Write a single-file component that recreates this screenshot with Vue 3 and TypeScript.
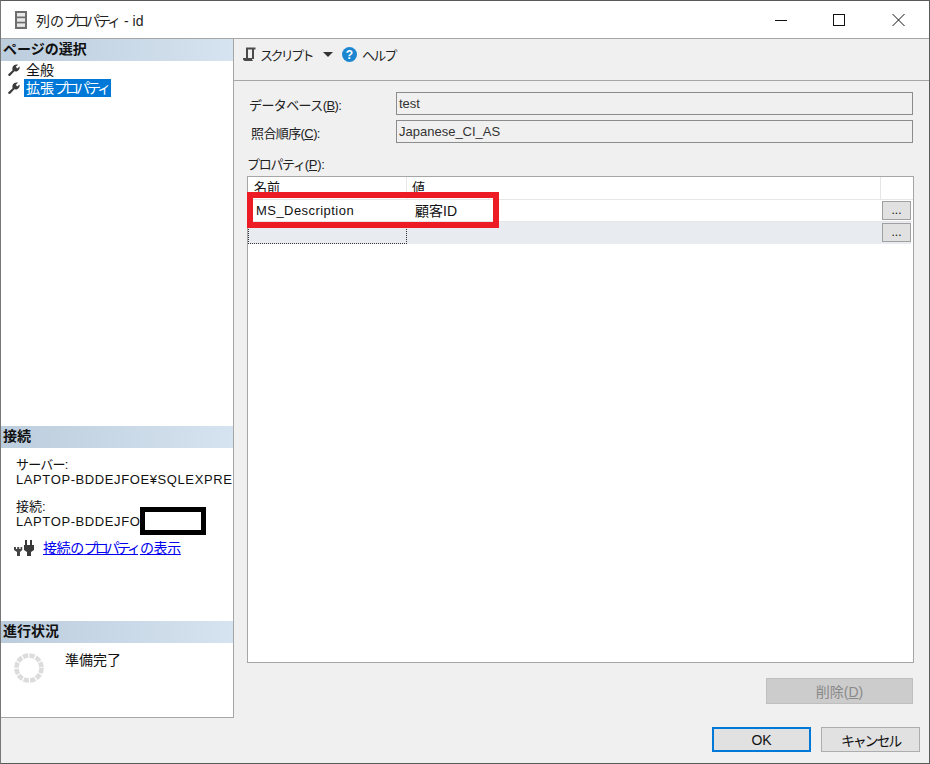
<script setup lang="ts">
const pages = [
  { kanji: '全般', kana: '', selected: false },
  { kanji: '拡張', kana: 'プロパティ', selected: true },
]
</script>

<template>
  <div class="window">
    <header class="titlebar">
      <svg class="title-icon" width="12" height="18" viewBox="0 0 12 18">
        <rect x="0" y="0" width="12" height="18" fill="#6e6e6e" />
        <rect x="2" y="2" width="8" height="3.5" fill="#e8e8e8" />
        <rect x="2" y="7.2" width="8" height="3.5" fill="#e8e8e8" />
        <rect x="2" y="12.4" width="8" height="3.5" fill="#e8e8e8" />
      </svg>
      <span class="title-text">列の<span class="kana">プロパティ</span> - id</span>
      <div class="controls">
        <svg width="58" height="14" viewBox="0 0 58 14"><path d="M0 7.5h12" stroke="#111" /></svg>
        <svg width="59" height="14" viewBox="0 0 59 14"><rect x="0.5" y="1.5" width="11" height="11" fill="none" stroke="#111" /></svg>
        <svg width="13" height="14" viewBox="0 0 13 14"><path d="M0.5 1L12.5 13M12.5 1L0.5 13" stroke="#111" /></svg>
      </div>
    </header>

    <div class="body">
      <aside class="side">
        <section class="sec sec-pages">
          <h2 class="sec-head">ページの選択</h2>
          <ul class="pages">
            <li v-for="p in pages" :key="p.kanji" class="page">
              <svg class="wrench" width="12" height="12" viewBox="0 0 12 12">
                <path d="M0.3 10.2L4.6 6.2C4 4.2 4.6 2 6.4 1C7.6 0.3 9 0.3 10 0.8L7.8 2.8L9.2 4.4L11.5 2.4C12 4.2 11.2 6 9.6 6.9C8.6 7.5 7.4 7.6 6.4 7.3L2.2 11.7C1.6 12.1 0.9 12 0.4 11.5C0 11.1 0 10.6 0.3 10.2Z" fill="#3c3c3c" />
              </svg>
              <span :class="['page-label', { selected: p.selected }]">{{ p.kanji }}<span class="kana">{{ p.kana }}</span></span>
            </li>
          </ul>
        </section>

        <section class="sec sec-conn">
          <h2 class="sec-head">接続</h2>
          <div class="conn">
            <p class="line kana-line">サーバー:</p>
            <p class="line mono">LAPTOP-BDDEJFOE¥SQLEXPRES</p>
            <p class="line gap">接続:</p>
            <p class="line mono">LAPTOP-BDDEJFO</p>
            <span class="redact"></span>
            <div class="linkrow">
              <svg width="20" height="16" viewBox="0 0 20 16">
                <path d="M0 7h2v2h1.2V7h2v2h1.4V7h1.6v3L6 12v4H3v-4L0 10z" fill="#444" />
                <path d="M11 0h2v5h3V0h2v5h2v5l-3 2v4h-4v-4l-3-2V5h1z" fill="#3a3a3a" />
              </svg>
              <a class="link">接続の<span class="kana">プロパティ</span>の表示</a>
            </div>
          </div>
        </section>

        <section class="sec sec-prog">
          <h2 class="sec-head">進行状況</h2>
          <div class="prog">
            <svg width="30" height="30" viewBox="0 0 30 30">
              <circle cx="15" cy="15" r="12.5" fill="none" stroke="#dcdcdc" stroke-width="4.6" stroke-dasharray="5.3 1.25" />
            </svg>
            <span class="prog-text">準備完了</span>
          </div>
        </section>
      </aside>

      <main class="main">
        <div class="toolbar">
          <svg width="13" height="14" viewBox="0 0 13 14">
            <path d="M3 0.5h9.5v2H11v9.5H9V2.5H5V12H3zM0 11h9v1.5l1 1.5H1.5L0 12.5z" fill="#4a4a4a" />
          </svg>
          <span class="tool-text script-text">スクリプト</span>
          <svg class="caret" width="10" height="5" viewBox="0 0 10 5"><path d="M0 0h10L5 5z" fill="#333" /></svg>
          <svg class="help" width="15" height="15" viewBox="0 0 15 15">
            <circle cx="7.5" cy="7.5" r="7.5" fill="#1c86d1" />
            <text x="7.5" y="11.5" text-anchor="middle" class="help-q">?</text>
          </svg>
          <span class="tool-text">ヘルプ</span>
        </div>

        <div class="content">
          <div class="field">
            <label class="field-label">データベース(<u>B</u>):</label>
            <div class="input">test</div>
          </div>
          <div class="field field-2">
            <label class="field-label indent">照合順序(<u>C</u>):</label>
            <div class="input">Japanese_CI_AS</div>
          </div>

          <div class="grid-label"><span class="kana-tight">プロパティ</span>(<u>P</u>):</div>
          <div class="grid">
            <div class="row head">
              <div class="cell name">名前</div>
              <div class="cell val">値</div>
              <div class="cell btn-cell"></div>
            </div>
            <div class="row data">
              <div class="cell name">MS_Description</div>
              <div class="cell val">顧客ID</div>
              <div class="cell btn-cell"><button class="dots">...</button></div>
            </div>
            <div class="row new">
              <div class="cell name focus"></div>
              <div class="cell val"></div>
              <div class="cell btn-cell"><button class="dots">...</button></div>
            </div>
            <span class="annotation"></span>
          </div>

          <div class="delete-row">
            <button class="delete">削除(<u>D</u>)</button>
          </div>
          <div class="actions">
            <button class="act ok">OK</button>
            <button class="act cancel">キャンセル</button>
          </div>
        </div>
      </main>
    </div>
  </div>
</template>

<style scoped>
.window {
  position: relative;
  box-sizing: border-box;
  width: 930px;
  height: 764px;
  display: flex;
  flex-direction: column;
  background: #f0f0f0;
  border: 1px solid #5a5a5a;
  border-left-color: #777;
  font-family: "Liberation Sans", "Noto Sans CJK JP", sans-serif;
  font-size: 13px;
  color: #111;
  overflow: hidden;
}
.kana { letter-spacing: -3px; margin-right: 2px; }
.titlebar {
  height: 37px;
  flex: none;
  display: flex;
  align-items: center;
  padding-left: 14px;
  background: #fff;
  border-bottom: 1px solid #a6a6a6;
}
.title-text {
  margin-left: 9px;
  font-size: 14px;
  color: #222;
}
.controls {
  margin-left: auto;
  margin-right: 24px;
  display: flex;
  align-items: center;
}
.body {
  flex: 1;
  display: flex;
  min-height: 0;
}
.side {
  box-sizing: content-box;
  width: 232px;
  height: 678px;
  display: flex;
  flex-direction: column;
  background: #fff;
  border-right: 1px solid #a6a6a6;
  border-bottom: 1px solid #a6a6a6;
  flex: none;
}
.sec-pages { height: 387px; }
.sec-conn { height: 195px; position: relative; }
.sec-prog { height: 96px; }
.sec-head {
  margin: 0;
  height: 22px;
  line-height: 21px;
  padding-left: 2px;
  font-size: 14px;
  font-weight: 700;
  color: #111;
  background: linear-gradient(90deg, #bccddd, #d6e3f0);
}
.pages {
  list-style: none;
  margin: 0;
  padding: 0;
}
.page {
  display: flex;
  align-items: center;
  height: 18px;
  padding-left: 7px;
}
.wrench { flex: none; }
.page-label {
  margin-left: 4px;
  padding: 0 1px 0 2px;
  font-size: 14px;
  line-height: 18px;
}
.page-label.selected {
  background: #0078d7;
  color: #fff;
}
.conn {
  padding: 9px 0 0 15px;
  overflow: hidden;
}
.line {
  margin: 0;
  font-size: 13px;
  line-height: 15px;
  white-space: nowrap;
}
.kana-line { letter-spacing: -0.8px; }
.mono { letter-spacing: 0.6px; }
.gap { margin-top: 12px; }
.redact {
  position: absolute;
  left: 139px;
  top: 81px;
  width: 56px;
  height: 18px;
  background: #fff;
  border: 5px solid #000;
}
.linkrow {
  display: flex;
  align-items: center;
  margin-top: 10px;
  margin-left: -2px;
}
.link {
  margin-left: 9px;
  font-size: 14px;
  line-height: 18px;
  letter-spacing: -0.4px;
  color: #0000ee;
  text-decoration: underline;
}
.prog {
  display: flex;
  padding: 10px 0 0 13px;
}
.prog-text {
  margin-left: 21px;
  margin-top: -2px;
  font-size: 14px;
  line-height: 18px;
}
.main {
  flex: 1;
  min-width: 0;
  display: flex;
  flex-direction: column;
}
.toolbar {
  height: 42px;
  flex: none;
  display: flex;
  align-items: center;
  box-sizing: border-box;
  padding: 0 0 11px 9px;
  border-bottom: 1px solid #a6a6a6;
}
.tool-text {
  margin-left: 5px;
  font-size: 13px;
  letter-spacing: -1.8px;
  color: #222;
}
.script-text { margin-left: 4px; letter-spacing: -2.6px; }
.caret { margin-left: 11px; }
.help { margin-left: 9px; }
.help-q {
  font-size: 12px;
  font-weight: 700;
  fill: #fff;
  font-family: "Liberation Sans", sans-serif;
}
.content {
  flex: 1;
  display: flex;
  flex-direction: column;
  padding: 11px 16px 0 13px;
  min-height: 0;
}
.field {
  display: flex;
  align-items: center;
  height: 23px;
}
.field-2 { margin-top: 5px; }
.field-label {
  width: 149px;
  flex: none;
  padding: 2px 0 0 2px;
  box-sizing: border-box;
  font-size: 13px;
  letter-spacing: -0.6px;
  color: #222;
}
.field-label.indent { padding-left: 4px; }
.input {
  flex: 1;
  box-sizing: border-box;
  height: 23px;
  line-height: 22px;
  padding-left: 2px;
  background: #f0f0f0;
  border: 1px solid #8c8c8c;
  font-size: 13px;
  color: #333;
}
.grid-label {
  margin-top: 12px;
  height: 21px;
  line-height: 20px;
  font-size: 13px;
  letter-spacing: -0.3px;
  color: #222;
}
.kana-tight { letter-spacing: -1.3px; }
.grid {
  position: relative;
  box-sizing: border-box;
  width: 667px;
  height: 487px;
  background: #fff;
  border: 1px solid #a6a6a6;
}
.row {
  display: grid;
  grid-template-columns: 159px 474px 31px;
  height: 22px;
}
.row.head {
  border-bottom: 1px solid #e6e6e6;
  box-sizing: content-box;
}
.row.data {
  height: 22px;
  background: #fff;
}
.row.new {
  background: #e8ecf0;
  height: 22px;
  margin-right: 2px;
}
.cell {
  box-sizing: border-box;
  font-size: 13px;
  line-height: 22px;
  padding-left: 6px;
  overflow: hidden;
  white-space: nowrap;
}
.head .cell {
  border-right: 1px solid #e6e6e6;
  line-height: 21px;
}
.head .val { padding-left: 5px; }
.head .btn-cell { border-right: 0; }
.data .name { padding-left: 8px; letter-spacing: 0.45px; }
.data .val { padding-left: 8px; font-size: 14px; }
.data .cell { border-bottom: 1px solid #e6e6e6; }
.focus {
  background: #e8ecf0;
  border: 1px dotted #333;
}
.btn-cell {
  padding: 1px 0 0 1px;
  overflow: visible;
}
.dots {
  display: block;
  box-sizing: border-box;
  width: 29px;
  height: 19px;
  padding: 0;
  background: #e1e1e1;
  border: 1px solid #a0a0a0;
  font: 12px/17px "Liberation Sans", sans-serif;
  color: #111;
}
.annotation {
  position: absolute;
  left: -1px;
  top: 15px;
  width: 240px;
  height: 24px;
  border: 6px solid #ed1c24;
  pointer-events: none;
}
.delete-row {
  display: flex;
  justify-content: flex-end;
  margin-top: 15px;
}
.delete {
  box-sizing: border-box;
  width: 147px;
  height: 26px;
  padding: 0;
  background: #cccccc;
  border: 1px solid #bfbfbf;
  font-family: inherit;
  font-size: 14px;
  color: #8a8a8a;
}
.actions {
  display: flex;
  gap: 10px;
  margin-top: 23px;
  margin-right: -7px;
  justify-content: flex-end;
}
.act {
  box-sizing: border-box;
  width: 99px;
  height: 25px;
  padding: 0;
  background: #e1e1e1;
  border: 1px solid #adadad;
  font-family: inherit;
  font-size: 14px;
  color: #111;
}
.act.ok {
  border: 2px solid #0078d7;
}
.cancel { letter-spacing: -2.2px; }
</style>
